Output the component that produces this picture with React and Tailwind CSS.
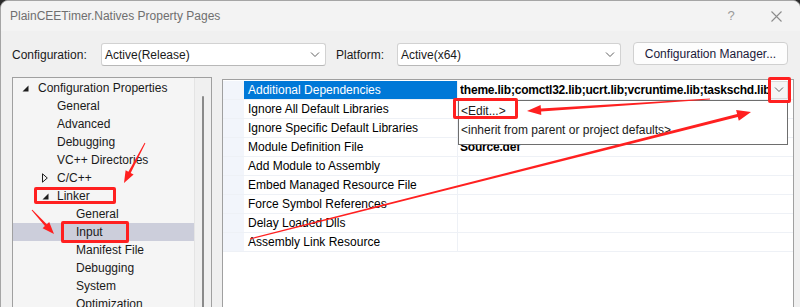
import React from 'react';

const tree = [
  { label: 'Configuration Properties', level: 0, icon: 'open' },
  { label: 'General', level: 1 },
  { label: 'Advanced', level: 1 },
  { label: 'Debugging', level: 1 },
  { label: 'VC++ Directories', level: 1 },
  { label: 'C/C++', level: 1, icon: 'closed' },
  { label: 'Linker', level: 1, icon: 'open' },
  { label: 'General', level: 2 },
  { label: 'Input', level: 2, selected: true },
  { label: 'Manifest File', level: 2 },
  { label: 'Debugging', level: 2 },
  { label: 'System', level: 2 },
  { label: 'Optimization', level: 2 },
];

const indent = ['pl-[6px]', 'pl-[25px]', 'pl-[44px]'];

const props = [
  { name: 'Additional Dependencies', value: 'theme.lib;comctl32.lib;ucrt.lib;vcruntime.lib;taskschd.lib', selected: true },
  { name: 'Ignore All Default Libraries' },
  { name: 'Ignore Specific Default Libraries' },
  { name: 'Module Definition File', value: 'Source.def' },
  { name: 'Add Module to Assembly' },
  { name: 'Embed Managed Resource File' },
  { name: 'Force Symbol References' },
  { name: 'Delay Loaded Dlls' },
  { name: 'Assembly Link Resource' },
];

const Chevron = () => (
  <svg width="10" height="6" viewBox="0 0 10 6">
    <path d="M1 0.5l4 4 4-4" fill="none" stroke="#606060" strokeWidth="1" />
  </svg>
);

const TreeIcon = ({ type }) => {
  if (type === 'open')
    return (
      <svg width="7" height="7" viewBox="0 0 7 7">
        <path d="M6.5 0.5V6.5H0.5Z" fill="#1e1e1e" />
      </svg>
    );
  if (type === 'closed')
    return (
      <svg width="6" height="10" viewBox="0 0 6 10">
        <path d="M0.5 0.8L5.3 5 0.5 9.2Z" fill="none" stroke="#1e1e1e" strokeWidth="1" />
      </svg>
    );
  return null;
};

// annotation arrow: tapered shaft + filled head
const Arrow = ({ from, to, w0 = 1, w1 = 2.6, len = 13, half = 5 }) => {
  const [x1, y1] = from;
  const [x2, y2] = to;
  const d = Math.hypot(x2 - x1, y2 - y1);
  const ux = (x2 - x1) / d;
  const uy = (y2 - y1) / d;
  const nx = -uy;
  const ny = ux;
  const bx = x2 - ux * len;
  const by = y2 - uy * len;
  const p = (x, y) => `${x.toFixed(1)},${y.toFixed(1)}`;
  const pts = [
    p(x1 + (nx * w0) / 2, y1 + (ny * w0) / 2),
    p(bx + (nx * w1) / 2, by + (ny * w1) / 2),
    p(bx + nx * half, by + ny * half),
    p(x2, y2),
    p(bx - nx * half, by - ny * half),
    p(bx - (nx * w1) / 2, by - (ny * w1) / 2),
    p(x1 - (nx * w0) / 2, y1 - (ny * w0) / 2),
  ];
  return <polygon points={pts.join(' ')} fill="#ff2020" />;
};

export default function App() {
  return (
    <div className="relative w-[800px] h-[307px] overflow-hidden bg-[#2b2b2b] font-['Liberation_Sans',Arial,sans-serif] text-[12px] text-[#1a1a1a]">
      <div className="w-[801px] h-[310px] rounded-t-[8px] border border-[#a5a5a5] bg-[#f0f0f0] flex flex-col">
        {/* title bar */}
        <div className="h-[30px] shrink-0 flex items-center bg-[#f3f3f3] rounded-t-[8px]">
          <span className="pl-[9px] text-[#6f6f6f]">PlainCEETimer.Natives Property Pages</span>
          <span className="ml-auto w-[20px] text-center text-[#9a9a9a] text-[13px]">?</span>
          <span className="w-[46px] flex justify-center pr-[1px] ml-[13px]">
            <svg width="11" height="11" viewBox="0 0 11 11">
              <path d="M0.5 0.5l10 10M10.5 0.5l-10 10" stroke="#8c8c8c" strokeWidth="1.1" />
            </svg>
          </span>
        </div>

        {/* configuration row */}
        <div className="h-[23px] mt-[12px] flex items-center pl-[11px]">
          <span className="w-[89px]">Configuration:</span>
          <div className="w-[225px] h-[23px] bg-white border border-[#d2d2d2] border-b-[#b8b8b8] rounded-[3px] flex items-center pl-[3px] pr-[5px]">
            <span className="flex-1">Active(Release)</span>
            <Chevron />
          </div>
          <span className="ml-[10px] w-[61px]">Platform:</span>
          <div className="w-[224px] h-[23px] bg-white border border-[#d2d2d2] border-b-[#b8b8b8] rounded-[3px] flex items-center pl-[3px] pr-[5px]">
            <span className="flex-1">Active(x64)</span>
            <Chevron />
          </div>
          <div className="ml-[12px] w-[155px] h-[23px] -mt-[2px] bg-[#fdfdfd] border border-[#d0d0d0] rounded-[4px] flex items-center justify-center text-[#1a1a3a]">
            Configuration Manager...
          </div>
        </div>

        {/* panels */}
        <div className="flex mt-[11px] pl-[11px] gap-[10px] flex-1">
          {/* tree */}
          <div className="w-[200px] h-[240px] border border-[#a0a0a0] bg-[#f5f5f5] flex">
            <div className="flex-1 pt-[1px]">
              {tree.map((t, i) => (
                <div
                  key={i}
                  className={`h-[18px] flex items-center ${indent[t.level]} ${t.selected ? 'bg-[#cccedb]' : ''}`}
                >
                  <span className={`w-[19px] flex items-center ${t.level === 0 ? 'pl-[3px]' : 'pl-[4px]'}`}>
                    <TreeIcon type={t.icon} />
                  </span>
                  <span className="whitespace-nowrap">{t.label}</span>
                </div>
              ))}
            </div>
            <div className="w-[17px] bg-[#f0f0f0] border-l border-[#e4e4e4] flex justify-center pt-[18px]">
              <div className="w-[2px] h-full bg-[#8a8a8a] rounded-full" />
            </div>
          </div>

          {/* property grid */}
          <div className="relative mt-[2px] w-[572px] h-[240px] border border-[#a0a0a0] bg-white pt-[1px]">
            {props.map((p, i) => (
              <div key={i} className="h-[19px] flex border-b border-[#eef1f6]">
                <div className="w-[21px] bg-[#f2f5fb]" />
                <div
                  className={`w-[214px] pl-[4px] flex items-center border-r border-[#eef1f6] ${
                    p.selected ? 'bg-[#0078d7] text-white' : 'text-black'
                  }`}
                >
                  {p.name}
                </div>
                <div className="flex-1 flex items-center pl-[2px] min-w-0">
                  <span className="flex-1 overflow-hidden whitespace-nowrap font-bold tracking-[-0.2px] text-black">{p.value}</span>
                  {p.selected && (
                    <div className="w-[18px] h-[18px] mr-[5px] ml-[1px] bg-[#f5f5f5] border border-[#dadada] flex items-center justify-center">
                      <Chevron />
                    </div>
                  )}
                </div>
              </div>
            ))}

            {/* open dropdown */}
            <div className="absolute left-[235px] top-[20px] w-[330px] h-[45px] bg-white border border-[#6e6e6e] border-t-dotted">
              <div className="h-[19px] flex items-center pl-[2px]">&lt;Edit...&gt;</div>
              <div className="h-[19px] flex items-center pl-[2px]">&lt;inherit from parent or project defaults&gt;</div>
            </div>
          </div>
        </div>
      </div>

      {/* annotations */}
      <div className="absolute left-[34px] top-[187px] w-[82px] h-[17px] border-[3px] border-[#ff2020] rounded-[2px]" />
      <div className="absolute left-[61px] top-[221px] w-[68px] h-[22px] border-[3px] border-[#ff2020] rounded-[2px]" />
      <div className="absolute left-[453px] top-[98px] w-[65px] h-[21px] border-[3px] border-[#ff2020] rounded-[2px]" />
      <div className="absolute left-[768px] top-[77px] w-[23px] h-[26px] border-[3px] border-[#ff2020] rounded-[2px]" />
      <svg className="absolute left-0 top-0 pointer-events-none" width="800" height="307" viewBox="0 0 800 307">
        <Arrow from={[145, 143]} to={[124, 183]} len={12} half={4.5} />
        <Arrow from={[32, 210]} to={[54, 234]} len={12} half={4.5} />
        <Arrow from={[710, 99]} to={[527, 111]} w1={3} len={14} half={5} />
        <Arrow from={[250, 239]} to={[751, 112]} w0={1.2} w1={3} len={14} half={5.5} />
      </svg>
    </div>
  );
}
